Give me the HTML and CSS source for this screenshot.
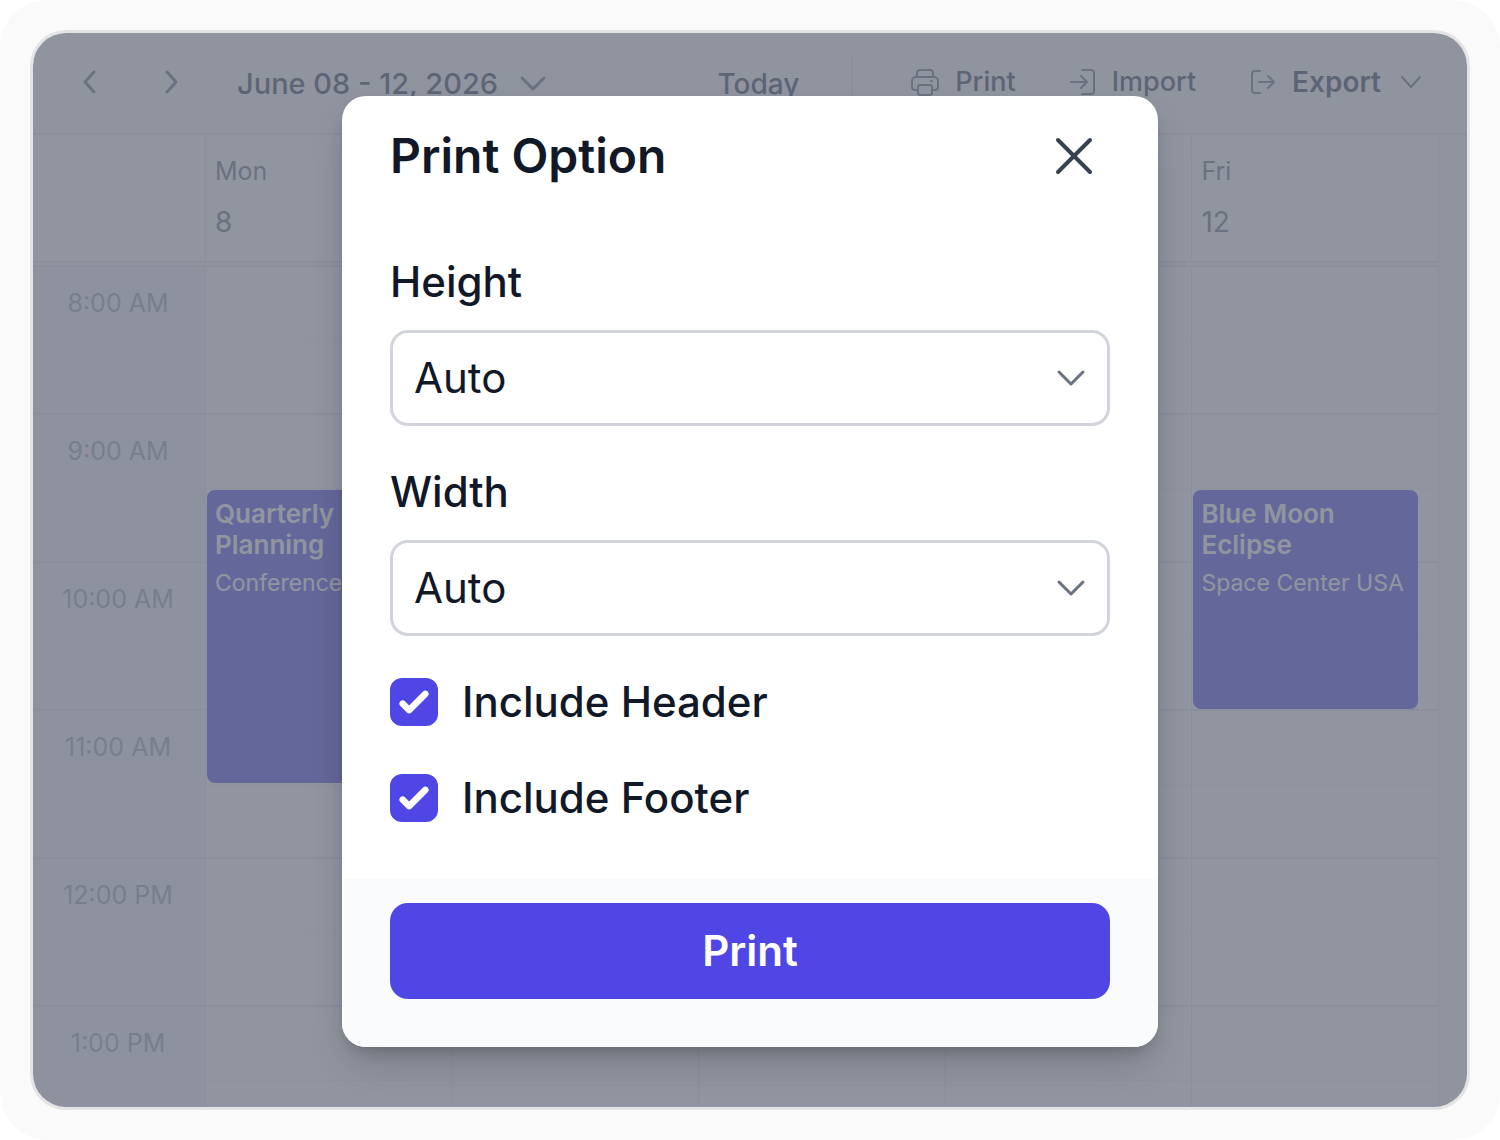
FILE: index.html
```html
<!DOCTYPE html>
<html lang="en">
<head>
<meta charset="utf-8">
<meta name="viewport" content="width=device-width, initial-scale=1">
<title>Print Option</title>
<link rel="stylesheet" href="styles.css">
</head>
<body>
<div class="page">
  <div class="frame">
    <main class="calendar">
      <header class="toolbar">
        <div class="toolbar-nav">
          <button class="tool-button" type="button" aria-label="Previous week">
            <svg class="icon icon--bold" width="26" height="28" viewBox="0 0 26 28"><path d="M17 4 8 14l9 10"/></svg>
          </button>
          <button class="tool-button" type="button" aria-label="Next week">
            <svg class="icon icon--bold" width="26" height="28" viewBox="0 0 26 28"><path d="m8 4 9 10-9 10"/></svg>
          </button>
        </div>
        <button class="tool-button tool-button--date" type="button">
          June 08 - 12, 2026
          <svg class="icon icon--bold" width="26" height="26" viewBox="0 0 26 26"><path d="m2 7 11 11L24 7"/></svg>
        </button>
        <button class="tool-button tool-button--today" type="button">Today</button>
        <div class="toolbar-actions">
          <button class="tool-button" type="button">
            <svg class="icon" width="28" height="28" viewBox="0 0 28 28"><path d="M6 9V5a3 3 0 0 1 3-3h10a3 3 0 0 1 3 3v4M6 22H4a3 3 0 0 1-3-3v-6a4 4 0 0 1 4-4h18a4 4 0 0 1 4 4v6a3 3 0 0 1-3 3h-2M9 17h10a2 2 0 0 1 2 2v6a2 2 0 0 1-2 2H9a2 2 0 0 1-2-2v-6a2 2 0 0 1 2-2zM20 13h1"/></svg>
            Print
          </button>
          <button class="tool-button" type="button">
            <svg class="icon" width="26" height="28" viewBox="0 0 26 28"><path d="M12 2h9a3 3 0 0 1 3 3v18a3 3 0 0 1-3 3h-9M1 14h15M11 8l6 6-6 6"/></svg>
            Import
          </button>
          <button class="tool-button tool-button--strong" type="button">
            <svg class="icon" width="26" height="28" viewBox="0 0 26 28"><path d="M10 3H5a3 3 0 0 0-3 3v16a3 3 0 0 0 3 3h5M9 14h15M18 8l6 6-6 6"/></svg>
            Export
            <svg class="icon" width="28" height="20" viewBox="0 0 28 20"><path d="m5 5 9 10 9-10"/></svg>
          </button>
        </div>
      </header>
      <div class="week">
        <div class="week-head">
          <div class="day-head"></div>
          <div class="day-head">
            <span class="day-name">Mon</span>
            <span class="day-number">8</span>
          </div>
          <div class="day-head"></div>
          <div class="day-head"></div>
          <div class="day-head"></div>
          <div class="day-head">
            <span class="day-name">Fri</span>
            <span class="day-number">12</span>
          </div>
        </div>
        <div class="week-body">
          <div class="hours">
            <div class="hour">8:00 AM</div>
            <div class="hour">9:00 AM</div>
            <div class="hour">10:00 AM</div>
            <div class="hour">11:00 AM</div>
            <div class="hour">12:00 PM</div>
            <div class="hour">1:00 PM</div>
          </div>
          <div class="day">
            <article class="event event--two-hours">
              <h3 class="event-title">Quarterly Planning</h3>
              <p class="event-place">Conference</p>
            </article>
          </div>
          <div class="day"></div>
          <div class="day"></div>
          <div class="day"></div>
          <div class="day">
            <article class="event">
              <h3 class="event-title">Blue Moon Eclipse</h3>
              <p class="event-place">Space Center USA</p>
            </article>
          </div>
        </div>
      </div>
    </main>
    <div class="overlay">
      <form class="dialog" role="dialog" aria-modal="true" aria-labelledby="dialog-title">
        <div class="dialog-head">
          <h2 class="dialog-title" id="dialog-title">Print Option</h2>
          <button class="close" type="button" aria-label="Close">
            <svg width="40" height="40" viewBox="0 0 40 40"><path d="m4 4 32 32M36 4 4 36"/></svg>
          </button>
        </div>
        <div class="dialog-body">
          <div class="field">
            <label class="label" for="height">Height</label>
            <div class="select-box">
              <select class="select" id="height"><option>Auto</option></select>
              <svg class="select-arrow" width="30" height="18" viewBox="0 0 30 18"><path d="m3 3 12 12L27 3"/></svg>
            </div>
          </div>
          <div class="field">
            <label class="label" for="width">Width</label>
            <div class="select-box">
              <select class="select" id="width"><option>Auto</option></select>
              <svg class="select-arrow" width="30" height="18" viewBox="0 0 30 18"><path d="m3 3 12 12L27 3"/></svg>
            </div>
          </div>
          <label class="label check">
            <span class="check-box">
              <input class="check-input" type="checkbox" checked>
              <svg class="check-mark" width="48" height="48" viewBox=".6 .6 14.8 14.8"><path d="M12.207 4.793a1 1 0 0 1 0 1.414l-5 5a1 1 0 0 1-1.414 0l-2-2a1 1 0 0 1 1.414-1.414L6.5 9.086l4.293-4.293a1 1 0 0 1 1.414 0z"/></svg>
            </span>
            Include Header
          </label>
          <label class="label check">
            <span class="check-box">
              <input class="check-input" type="checkbox" checked>
              <svg class="check-mark" width="48" height="48" viewBox=".6 .6 14.8 14.8"><path d="M12.207 4.793a1 1 0 0 1 0 1.414l-5 5a1 1 0 0 1-1.414 0l-2-2a1 1 0 0 1 1.414-1.414L6.5 9.086l4.293-4.293a1 1 0 0 1 1.414 0z"/></svg>
            </span>
            Include Footer
          </label>
        </div>
        <div class="dialog-foot">
          <button class="submit" type="button">Print</button>
        </div>
      </form>
    </div>
  </div>
</div>
</body>
</html>
```
FILE: styles.css
```css
* {
  box-sizing: border-box;
}

body {
  margin: 0;
  background: #fff;
  color: #111827;
  font-family: Inter, "Liberation Sans", sans-serif;
}

h2, h3, p {
  margin: 0;
}

button, select, input {
  margin: 0;
  padding: 0;
  border: 0;
  font: inherit;
  color: inherit;
}

.page {
  display: flex;
  height: 100vh;
  padding: 30px;
  border-radius: 48px;
  background: #fafafa;
}

.frame {
  position: relative;
  display: flex;
  flex: 1;
  overflow: hidden;
  border: 3px solid #e4e4e5;
  border-radius: 36px;
}

/* Calendar */

.calendar {
  display: flex;
  flex: 1;
  flex-direction: column;
  min-width: 0;
  background: #fafbfc;
}

.toolbar {
  display: flex;
  flex: none;
  align-items: center;
  height: 102px;
  padding: 0 42px 2px 44px;
  border-bottom: 2px solid #e5e7eb;
  color: #374151;
  font-size: 27px;
  font-weight: 500;
  line-height: 40px;
}

.toolbar-nav {
  display: flex;
  gap: 56px;
}

.tool-button {
  display: flex;
  align-items: center;
  gap: 16px;
  background: none;
  white-space: nowrap;
}

.tool-button--date,
.tool-button--today {
  padding-top: 4px;
}

.tool-button--date {
  gap: 22px;
  margin-left: 52px;
  font-size: 29px;
}

.tool-button--today {
  margin-left: auto;
  font-size: 28px;
}

.tool-button--strong {
  font-size: 28px;
  font-weight: 600;
}

.toolbar-actions {
  display: flex;
  align-items: center;
  height: 52px;
  margin-left: 52px;
  padding-left: 58px;
  border-left: 2px solid #e5e7eb;
  gap: 54px;
}

.icon {
  flex: none;
  fill: none;
  stroke: #6b7280;
  stroke-width: 2;
  stroke-linecap: round;
  stroke-linejoin: round;
}

.icon--bold {
  stroke-width: 3;
}

.week {
  display: flex;
  flex: 1;
  flex-direction: column;
  min-height: 0;
  margin-right: 28px;
  overflow: hidden;
  background: #fff;
}

.week-head,
.week-body {
  display: grid;
  flex: none;
  grid-template-columns: 173px repeat(5, 1fr);
}

.week-head {
  height: 132px;
  padding-bottom: 2px;
  border-bottom: 2px solid #e5e7eb;
}

.day-head {
  display: flex;
  flex-direction: column;
  padding: 16px 9px;
  border-right: 1px solid #e5e7eb;
  border-bottom: 2px solid #e5e7eb;
  color: #6b7280;
  gap: 8px;
}

.day-name {
  font-size: 25px;
  line-height: 40px;
}

.day-number {
  font-size: 28px;
  line-height: 46px;
}

.hours {
  border-right: 1px solid #e5e7eb;
  background: #f3f4f6;
}

.hour {
  height: 148px;
  padding-right: 2px;
  border-bottom: 2px solid #e5e7eb;
  color: #9ca3af;
  font-size: 25px;
  line-height: 72px;
  text-align: center;
}

.day {
  display: grid;
  grid-template-rows: repeat(12, 74px);
  border-right: 1px solid #e5e7eb;
  background:
    repeating-linear-gradient(transparent 0 73px, #f3f4f6 73px 74px, transparent 74px 146px, #e5e7eb 146px 148px);
}

.event {
  grid-row: 4 / span 3;
  margin: 1px 20px 2px 1px;
  padding: 8px;
  border-radius: 8px;
  background: #5248e8;
  color: #fff;
}

.event--two-hours {
  grid-row: 4 / span 4;
}

.event-title {
  font-size: 26px;
  font-weight: 600;
  line-height: 31px;
}

.event-place {
  padding-top: 7px;
  font-size: 23px;
  line-height: 32px;
  white-space: nowrap;
}

/* Dialog */

.overlay {
  position: absolute;
  inset: 0;
  display: flex;
  align-items: flex-start;
  justify-content: center;
  padding: 63px 24px 60px;
  overflow: hidden;
  background: rgba(107, 114, 128, .75);
}

.dialog {
  width: 100%;
  max-width: 816px;
  overflow: hidden;
  border-radius: 24px;
  background: #fff;
  box-shadow: 0 20px 40px -8px rgba(0, 0, 0, .2), 0 8px 16px -6px rgba(0, 0, 0, .2);
}

.dialog-head {
  display: flex;
  align-items: center;
  justify-content: space-between;
  padding: 24px 64px 24px 48px;
}

.dialog-title {
  font-size: 48px;
  font-weight: 600;
  line-height: 72px;
}

.close {
  display: flex;
  background: none;
}

.close path {
  fill: none;
  stroke: #374151;
  stroke-width: 4;
  stroke-linecap: round;
}

.dialog-body {
  display: flex;
  flex-direction: column;
  padding: 36px 48px 51px;
  gap: 36px;
}

.field {
  display: flex;
  flex-direction: column;
  gap: 18px;
}

.label {
  font-size: 42px;
  font-weight: 500;
  line-height: 60px;
}

.select-box {
  display: grid;
  align-items: center;
}

.select {
  grid-area: 1 / 1;
  width: 100%;
  height: 96px;
  padding: 0 72px 0 21px;
  border: 3px solid #d1d5db;
  border-radius: 18px;
  appearance: none;
  background: #fff;
  font-size: 42px;
  line-height: 60px;
}

.select-arrow {
  grid-area: 1 / 1;
  justify-self: end;
  margin-right: 24px;
  fill: none;
  stroke: #6b7280;
  stroke-width: 3;
  stroke-linecap: round;
  stroke-linejoin: round;
  pointer-events: none;
}

.check {
  display: flex;
  align-items: center;
  gap: 24px;
}

.check-box {
  display: grid;
}

.check-input {
  grid-area: 1 / 1;
  width: 48px;
  height: 48px;
  border: 3px solid #d1d5db;
  border-radius: 12px;
  appearance: none;
  background: #fff;
}

.check-input:checked {
  border-color: #4f46e5;
  background: #4f46e5;
}

.check-mark {
  grid-area: 1 / 1;
  fill: #fff;
  pointer-events: none;
}

.dialog-foot {
  padding: 24px 48px 48px;
  background: #fafbfd;
}

.submit {
  display: block;
  width: 100%;
  height: 96px;
  border-radius: 18px;
  background: #4f46e5;
  color: #fff;
  font-size: 42px;
  font-weight: 600;
  line-height: 60px;
}
```
